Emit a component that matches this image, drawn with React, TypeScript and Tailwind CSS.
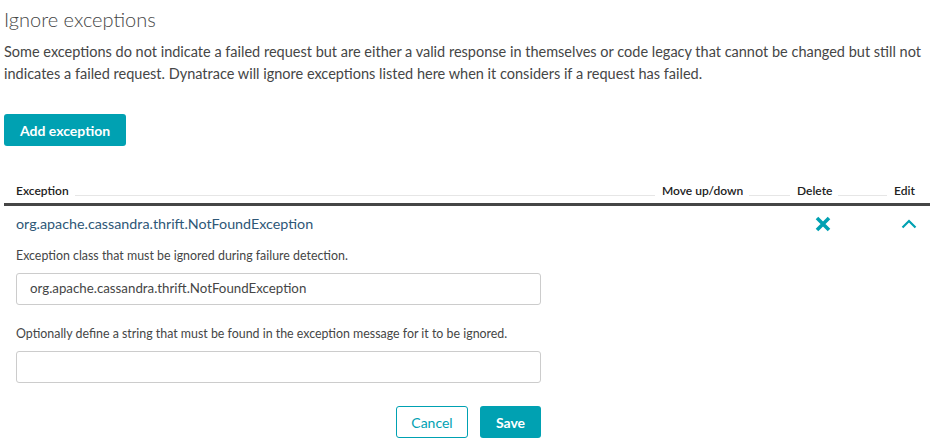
import React from "react";

export default function App() {
  return (
    <div className="w-[934px] h-[446px] bg-white overflow-hidden text-[#454646]" style={{ fontFamily: "Lato, 'Liberation Sans', sans-serif" }}>
      <div className="pl-[4px] pr-[4px]">
        <h1 className="pt-[7px] text-[20px] leading-[24px] font-light text-[#454646]">Ignore exceptions</h1>
        <p className="mt-[10px] text-[14.5px] leading-[22px] pr-[2px]">
          Some exceptions do not indicate a failed request but are either a valid response in themselves or code legacy that cannot be changed but still not indicates a failed request. Dynatrace will ignore exceptions listed here when it considers if a request has failed.
        </p>
        <button className="mt-[29px] h-[32px] px-[16px] rounded-[3px] bg-[#00a1b2] text-white text-[14px] font-bold">Add exception</button>

        <div className="mt-[36px] w-[926px]">
          <div className="flex items-end h-[16px] text-[12px] leading-[14px] font-semibold text-[#222]">
            <div className="flex items-end w-[651px] pl-[12px]">
              <span>Exception</span>
              <span className="flex-1 ml-[6px] mb-[2px] border-b border-[#e6e6e6]" />
            </div>
            <div className="flex items-end w-[135px] pl-[7px]">
              <span>Move up/down</span>
              <span className="flex-1 ml-[6px] mb-[2px] border-b border-[#e6e6e6]" />
            </div>
            <div className="flex items-end w-[97px] pl-[7px]">
              <span>Delete</span>
              <span className="flex-1 ml-[6px] mb-[2px] border-b border-[#e6e6e6]" />
            </div>
            <div className="flex items-end w-[43px] pl-[7px]">
              <span>Edit</span>
            </div>
          </div>
          <div className="mt-[5px] h-[3px] bg-[#454646]" />
          <div className="flex items-center h-[36px]">
            <div className="w-[786px] pl-[12px] text-[14.3px] text-[#2e5777]">org.apache.cassandra.thrift.NotFoundException</div>
            <div className="w-[97px] flex justify-start pl-[25px]">
              <svg width="16" height="16" viewBox="0 0 16 16">
                <path d="M2 2 L14 14 M14 2 L2 14" stroke="#00a1b2" strokeWidth="3.6" strokeLinecap="butt" />
              </svg>
            </div>
            <div className="w-[43px] flex justify-center">
              <svg width="16" height="10" viewBox="0 0 16 10">
                <path d="M1.5 8.5 L8 2 L14.5 8.5" stroke="#00a1b2" strokeWidth="2.2" fill="none" />
              </svg>
            </div>
          </div>
          <div className="pl-[12px]">
            <div className="mt-[6px] text-[12.4px] leading-[16px]">Exception class that must be ignored during failure detection.</div>
            <div className="mt-[9px] w-[525px] h-[32px] border border-[#cccccc] rounded-[3px] flex items-center pl-[13px] text-[13.3px] text-[#454646]">org.apache.cassandra.thrift.NotFoundException</div>
            <div className="mt-[21px] text-[12.4px] leading-[16px]">Optionally define a string that must be found in the exception message for it to be ignored.</div>
            <div className="mt-[9px] w-[525px] h-[32px] border border-[#cccccc] rounded-[3px]" />
            <div className="w-[525px] mt-[23px] flex justify-end gap-[12px]">
              <button className="h-[32px] w-[72px] border border-[#00a1b2] rounded-[3px] text-[14px] text-[#00a1b2] bg-white">Cancel</button>
              <button className="h-[32px] w-[61px] rounded-[3px] text-[14px] font-bold text-white bg-[#00a1b2]">Save</button>
            </div>
          </div>
        </div>
      </div>
    </div>
  );
}
